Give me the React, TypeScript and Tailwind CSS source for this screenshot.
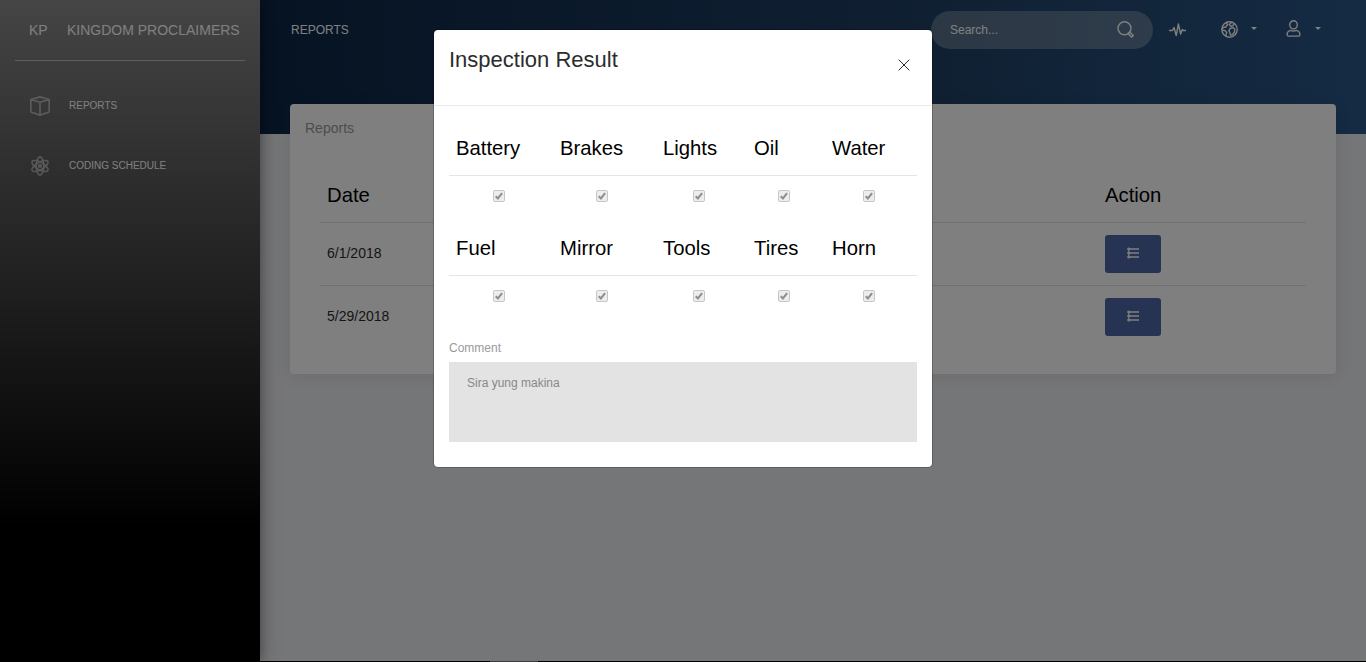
import type { ReactNode } from 'react'

const checks = [
  ['Battery', 'Brakes', 'Lights', 'Oil', 'Water'],
  ['Fuel', 'Mirror', 'Tools', 'Tires', 'Horn'],
]

const reports = ['6/1/2018', '5/29/2018']

function BoxIcon() {
  return (
    <svg className="size-5" viewBox="0 0 20 20" fill="none" stroke="currentColor" strokeWidth="1.7" strokeLinejoin="round">
      <path d="M10 .9 19.2 3.5V16L10 19.100.8 16V3.500zM.8 3.500 10 6.300l9.200-2.800M10 6.300v12.500" />
    </svg>
  )
}

function AtomIcon() {
  return (
    <svg className="size-5" viewBox="0 0 20 20" fill="none" stroke="currentColor" strokeWidth="1.6">
      <ellipse cx="10" cy="10" rx="3.700" ry="9.100" />
      <ellipse cx="10" cy="10" rx="3.700" ry="9.100" transform="rotate(60 10 10)" />
      <ellipse cx="10" cy="10" rx="3.700" ry="9.100" transform="rotate(120 10 10)" />
      <circle cx="10" cy="10" r="1.300" fill="currentColor" />
    </svg>
  )
}

function SearchIcon() {
  return (
    <svg className="-mt-px h-[17px] w-[17px]" viewBox="0 0 17 17" fill="none" stroke="currentColor" strokeWidth="1.4">
      <circle cx="7.500" cy="7.300" r="6.500" />
      <path d="m10.900 12.500 1.700-1.600 3.600 3.600-1.600 1.600z" />
    </svg>
  )
}

function PulseIcon() {
  return (
    <svg className="h-4 w-[17px]" viewBox="0 0 17 16" fill="none" stroke="currentColor" strokeWidth="1.4" strokeLinejoin="round">
      <path d="M0 8.500h3.400l1.600-3 2.200 8L9.400 2l2.200 10 1.700-4.500.8 1H17" />
    </svg>
  )
}

function GlobeIcon() {
  return (
    <svg className="size-[17px]" viewBox="0 0 17 17" fill="none" stroke="currentColor" strokeWidth="1.4" strokeLinejoin="round">
      <circle cx="8.500" cy="8.500" r="7.700" />
      <path d="M5.300 1.500 6.600 3.600 4.800 6 2.200 6.500 1 8.200M1.300 9.300l2.500 .2 2 1.900-.8 2.100.3 2M10.700 1.200 8.300 3.600l1.200 1.600 2.300-.4 1.300-2.300M9 7.500l3-.9 1.700 1.500-.2 3.200-2.200 2.500-1.900.3-.5-2.600-1-1.600z" />
    </svg>
  )
}

function UserIcon() {
  return (
    <svg className="h-[17px] w-[15px]" viewBox="0 0 15 17" fill="none" stroke="currentColor" strokeWidth="1.4">
      <ellipse cx="7.500" cy="4.800" rx="3.800" ry="4.100" />
      <path d="M4.500 10.400C2.200 11 1.100 12.300 1.100 14.400c0 .9.500 1.700 1.400 1.700h10c.9 0 1.400-.8 1.400-1.700 0-2.100-1.100-3.400-3.400-4-1.800.8-4.200.8-6 0z" />
    </svg>
  )
}

function ListIcon() {
  return (
    <svg className="-mt-0.5 h-3 w-3" viewBox="0 0 12 12" fill="none" stroke="currentColor">
      <path d="M3 2h9M3 6h9M3 10h9" strokeWidth="1.300" />
      <path d="M1.800 2v8" strokeWidth="1" />
      <circle cx="1.800" cy="2" r="1" strokeWidth="1.200" />
      <circle cx="1.800" cy="6" r="1" strokeWidth="1.200" />
      <circle cx="1.800" cy="10" r="1" strokeWidth="1.200" />
    </svg>
  )
}

function Caret() {
  return (
    <svg className="-mt-0.5 h-[3px] w-[6px]" viewBox="0 0 6 3" fill="currentColor">
      <path d="M0 0h6L3 3z" />
    </svg>
  )
}

function CheckedBox() {
  return (
    <svg className="mr-[5px] h-3 w-3" viewBox="0 0 12 12">
      <rect x=".5" y=".5" width="11" height="11" rx="1.500" fill="#ededed" stroke="#c6c6c6" />
      <path d="M2.700 6.300 4.900 8.400 9.100 3.100" fill="none" stroke="#8f8f8f" strokeWidth="2.100" />
    </svg>
  )
}

function NavItem({ icon, label }: { icon: ReactNode; label: string }) {
  return (
    <a className="flex h-[60px] items-center pl-[30px] text-[10px] text-white">
      <span className="mr-[19px] pt-px opacity-50">{icon}</span>
      {label}
    </a>
  )
}

function Sidebar() {
  return (
    <aside className="z-10 flex w-[260px] shrink-0 flex-col bg-[linear-gradient(to_bottom,#8a8a8a_0%,#000_80%)] shadow-[0_2px_22px_0_rgba(0,0,0,0.2),0_0_12px_0_rgba(0,0,0,0.35)]">
      <div className="mx-[15px] flex h-[61px] items-center border-b border-white/50 pl-[13px] text-sm whitespace-nowrap text-white">
        <span className="w-[39px] pl-px">KP</span>
        <span>KINGDOM PROCLAIMERS</span>
      </div>
      <nav className="flex flex-col pt-[14px]">
        <NavItem icon={<BoxIcon />} label="REPORTS" />
        <NavItem icon={<AtomIcon />} label="CODING SCHEDULE" />
      </nav>
    </aside>
  )
}

function TopBar() {
  return (
    <header className="flex h-[134px] shrink-0 items-start bg-[linear-gradient(to_right,#0c2646_0%,#204065_60%,#2a5788_100%)] pr-[45px] pl-[31px] text-white">
      <span className="mt-[21px] text-xs leading-[18px]">REPORTS</span>
      <div className="mt-[11px] ml-auto flex h-[38px] w-[222px] items-center justify-between rounded-full bg-[#dedede]/30 pr-[19px] pl-[19px] text-xs">
        <span>Search...</span>
        <SearchIcon />
      </div>
      <div className="mt-[21px] flex h-[17px] items-center">
        <span className="ml-4"><PulseIcon /></span>
        <span className="-mt-px ml-[35px]"><GlobeIcon /></span>
        <span className="ml-[13px]"><Caret /></span>
        <span className="-mt-[2px] ml-[29px]"><UserIcon /></span>
        <span className="ml-[14px]"><Caret /></span>
      </div>
    </header>
  )
}

function ReportsCard() {
  return (
    <section className="z-[1] mx-[30px] -mt-[30px] h-[270px] rounded bg-white px-[15px] shadow-[0_1px_15px_1px_rgba(39,39,39,0.1)]">
      <h2 className="pt-[14px] text-sm leading-5 text-[#9a9a9a]">Reports</h2>
      <div className="mx-[15px] mt-[30px]">
        <div className="flex h-[55px] items-center border-b border-[#dee2e6] px-[7px] text-[20.3px] text-black">
          <span className="w-[778px]">Date</span>
          <span>Action</span>
        </div>
        {reports.map((date, i) => (
          <div key={date} className={`flex items-center px-[7px] text-sm text-[#2c2c2c] ${i === 0 ? 'h-[63px] border-b border-[#dee2e6]' : 'h-[62px]'}`}>
            <span className="w-[778px] pb-0.5">{date}</span>
            <button className="flex h-[38px] w-[56px] items-center justify-center rounded-[3px] bg-[#4c66a6] text-white">
              <ListIcon />
            </button>
          </div>
        ))}
      </div>
    </section>
  )
}

function InspectionDialog() {
  return (
    <div role="dialog" className="h-[439px] w-[500px] rounded-[5px] border border-black/20 bg-white bg-clip-padding">
      <div className="flex h-[76px] justify-between border-b border-[#e9ecef] px-[15px]">
        <h1 className="pt-[15px] text-[22px] leading-[30px] text-[#2c2c2c]">Inspection Result</h1>
        <svg className="mt-[29px] mr-[7px] h-3 w-3" viewBox="0 0 12 12" stroke="#2c2c2c" strokeWidth="1">
          <path d="m.7.700 10.600 10.600M11.300.700.7 11.300" />
        </svg>
      </div>
      <div className="px-[15px] pt-[15px]">
        {checks.map((row) => (
          <div key={row[0]} className="grid h-[100px] grid-cols-[104px_103px_91px_78px_92px] grid-rows-[55px_45px]">
            {row.map((name) => (
              <div key={name} className="flex items-center border-b border-[#e3e6e9] pl-[7px] text-[20.3px] text-black">{name}</div>
            ))}
            {row.map((name, i) => (
              <div key={name} className={`flex items-start justify-center pt-[14px] ${i === 1 || i === 2 ? '' : 'pl-px'}`}><CheckedBox /></div>
            ))}
          </div>
        ))}
        <div className="mt-[17px] text-xs leading-5 text-[#9a9a9a]">Comment</div>
        <div className="mt-1 h-20 bg-[#e3e3e3] px-[18px] pt-[11px] text-xs leading-5 text-[#888]">Sira yung makina</div>
      </div>
    </div>
  )
}

export default function App() {
  return (
    <div className="relative h-[662px] w-[1366px] overflow-hidden bg-black font-['Liberation_Sans',Arial,sans-serif]">
      <div className="flex h-[661px] overflow-hidden bg-[#ebecf1]">
        <Sidebar />
        <main className="flex min-w-0 flex-1 flex-col">
          <TopBar />
          <ReportsCard />
        </main>
      </div>
      <div className="ml-[490px] h-px w-12 bg-[#777]" />
      <div className="absolute inset-0 z-20 flex items-start justify-center bg-black/50 pt-[29px]">
        <InspectionDialog />
      </div>
    </div>
  )
}
